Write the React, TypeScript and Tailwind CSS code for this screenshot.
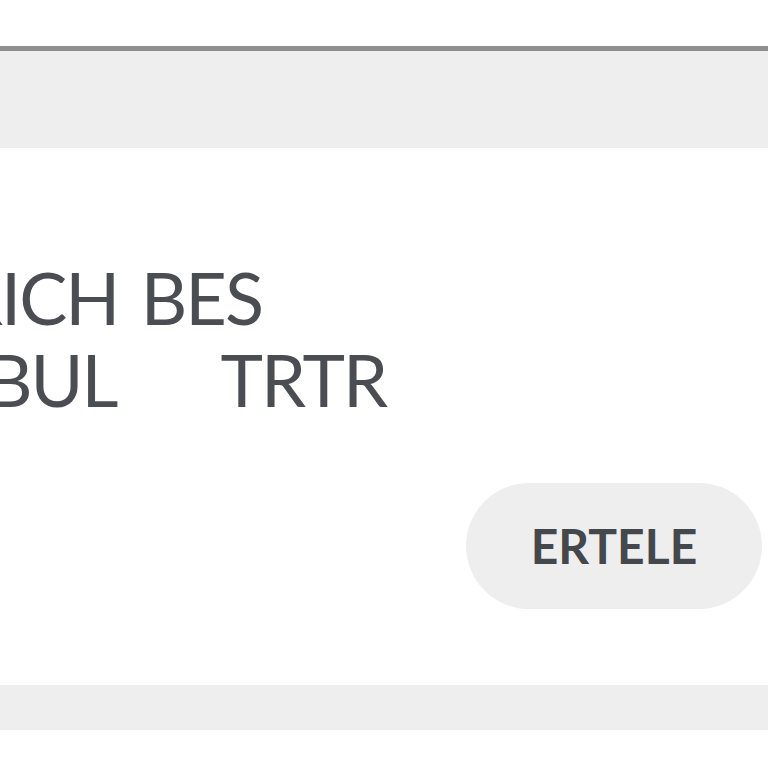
export default function App() {
  return (
    <div
      className="flex h-[768px] w-[768px] flex-col overflow-hidden bg-white"
      style={{ fontFamily: 'Lato, "Noto Sans", sans-serif' }}
    >
      <div className="h-[46px] bg-white" />
      <div className="h-[5px] bg-[#8f8f8f]" />
      <div className="h-[97px] bg-[#eeeeef]" />

      <section className="flex h-[537px] flex-col overflow-hidden bg-white">
        <div className="mt-[108px] flex flex-col text-[72px] font-normal leading-[82px] tracking-[-2px] text-[#4a4d52]">
          <p className="-ml-[42px] whitespace-nowrap">
            RICH<span className="tracking-[4px]"> </span>BES
          </p>
          <div className="flex whitespace-nowrap">
            <span className="-ml-[14px]">BUL</span>
            <span className="ml-[104px]">TRTR</span>
          </div>
        </div>

        <div className="mt-[63px] flex justify-end pr-[6px]">
          <button className="flex h-[126px] w-[296px] items-center justify-center rounded-full bg-[#eeeeee] text-[48px] font-bold text-[#44474c]">
            ERTELE
          </button>
        </div>
      </section>

      <div className="h-[45px] bg-[#eeeeee]" />
      <div className="flex-1 bg-white" />
    </div>
  );
}
